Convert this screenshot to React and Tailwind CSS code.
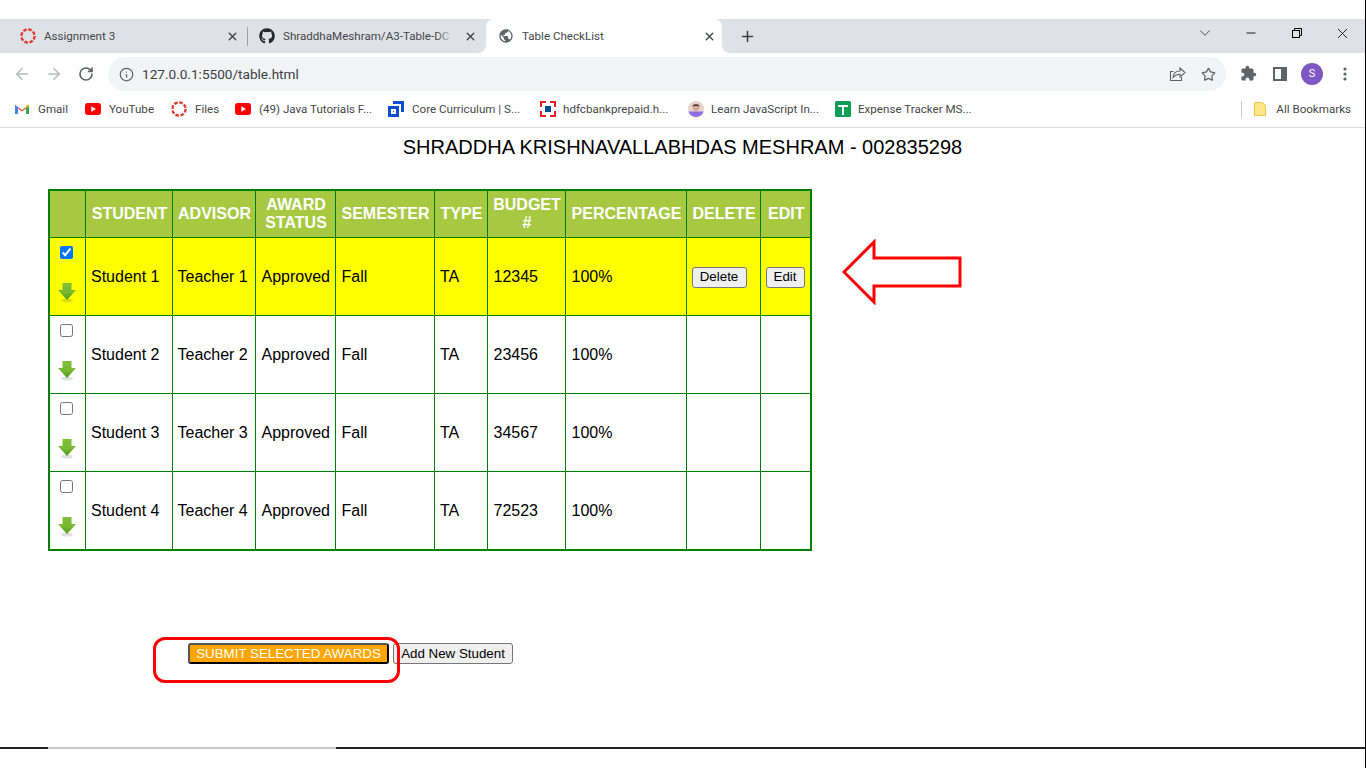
import React from 'react'
import { ArrowLeft, ArrowRight, RotateCw, Info, Star, ChevronDown, Minus, X, Plus } from 'lucide-react'
import { FaGithub } from 'react-icons/fa'
import { MdExtension, MdPublic } from 'react-icons/md'

const DashedCircle = () => (
  <svg width="16" height="16" viewBox="0 0 16 16" className="shrink-0">
    <circle cx="8" cy="8" r="6.6" fill="none" stroke="#e33b2e" strokeWidth="2.4" strokeDasharray="3.6 1.58" />
  </svg>
)

const Gmail = () => (
  <svg width="16" height="16" viewBox="0 0 16 16" className="shrink-0">
    <path d="M1 13V4l7 5 7-5v9h-3V7.5L8 10.4 4 7.5V13z" fill="#ea4335" />
    <path d="M1 4v9h3V6z" fill="#4285f4" />
    <path d="M12 6v7h3V4z" fill="#34a853" />
    <path d="M15 3.5V5l-3 2.2V4.2z" fill="#fbbc04" />
  </svg>
)

const YouTube = () => (
  <svg width="16" height="16" viewBox="0 0 16 16" className="shrink-0">
    <rect x="0" y="2" width="16" height="12" rx="3" fill="#f00" />
    <path d="M6.3 5.2v5.6L11 8z" fill="#fff" />
  </svg>
)

const CoreIcon = () => (
  <svg width="16" height="16" viewBox="0 0 16 16" className="shrink-0">
    <path d="M0 5h11v11H0z" fill="#0b4fd0" />
    <path d="M3 8h5v5H3z" fill="#fff" />
    <path d="M5 0h11v11h-3V3H5z" fill="#0b4fd0" />
    <path d="M5 10h1v1H5z" fill="#0b4fd0" />
  </svg>
)

const Hdfc = () => (
  <svg width="16" height="16" viewBox="0 0 16 16" className="shrink-0">
    <rect width="16" height="16" fill="#fff" />
    <path d="M0 0h6v2H2v4H0zM10 0h6v6h-2V2h-4zM0 10h2v4h4v2H0zM14 10h2v6h-6v-2h4z" fill="#ed1c24" />
    <rect x="5" y="5" width="6" height="6" fill="#004c8f" />
  </svg>
)

const Person = () => (
  <svg width="16" height="16" viewBox="0 0 16 16" className="shrink-0">
    <clipPath id="pc"><circle cx="8" cy="8" r="8" /></clipPath>
    <g clipPath="url(#pc)">
      <rect width="16" height="16" fill="#e6d3cf" />
      <rect y="10.5" width="16" height="6" fill="#8f6fe0" />
      <circle cx="8" cy="6.5" r="3.4" fill="#d9a68f" />
      <path d="M4.5 5.5C5 2.5 11 2.5 11.5 5.5 9.5 4.5 6.5 4.5 4.5 5.5z" fill="#3a2a26" />
    </g>
  </svg>
)

const Sheet = () => (
  <svg width="16" height="16" viewBox="0 0 16 16" className="shrink-0">
    <rect width="16" height="16" rx="1.5" fill="#0f9d58" />
    <path d="M3 4h10v2H9v8H7V6H3z" fill="#fff" />
  </svg>
)

const ShareIcon = () => (
  <svg width="17" height="16" viewBox="0 0 17 16" fill="none" stroke="#5f6368" strokeWidth="1.1" className="shrink-0">
    <path d="M4.5 5.5H1.5v9h11V11" />
    <path d="M4 11.5C4.3 7.5 7 5 11 5V2l5 4.5-5 4.5V8.2c-3 0-5 1-7 3.3z" />
  </svg>
)

const bookmarks = [
  { icon: <Gmail />, label: 'Gmail', w: 'w-[31px]', gap: 'gap-[8px]' },
  { icon: <YouTube />, label: 'YouTube', w: 'w-[46px]', gap: 'gap-[8px]' },
  { icon: <DashedCircle />, label: 'Files', w: 'w-[24px]', gap: 'gap-[8px]' },
  { icon: <YouTube />, label: '(49) Java Tutorials F...', w: 'w-[113px]', gap: 'gap-[8px]' },
  { icon: <CoreIcon />, label: 'Core Curriculum | S...', w: 'w-[112px]', gap: 'gap-[8px]' },
  { icon: <Hdfc />, label: 'hdfcbankprepaid.h...', w: 'w-[109px]', gap: 'gap-[7px]' },
  { icon: <Person />, label: 'Learn JavaScript In...', w: 'w-[108px]', gap: 'gap-[7px]' },
  { icon: <Sheet />, label: 'Expense Tracker MS...', w: 'w-[113px]', gap: 'gap-[7px]' },
]

const students = [
  { name: 'Student 1', teacher: 'Teacher 1', budget: '12345', selected: true },
  { name: 'Student 2', teacher: 'Teacher 2', budget: '23456' },
  { name: 'Student 3', teacher: 'Teacher 3', budget: '34567' },
  { name: 'Student 4', teacher: 'Teacher 4', budget: '72523' },
]

const DownArrow = ({ id }) => (
  <svg width="20" height="22" viewBox="0 0 20 22" className="block">
    <defs>
      <linearGradient id={id} x1="0" y1="0" x2="0" y2="1">
        <stop offset="0" stopColor="#7fbf3a" />
        <stop offset="0.55" stopColor="#7ab833" />
        <stop offset="1" stopColor="#4d9a1e" />
      </linearGradient>
    </defs>
    <ellipse cx="10" cy="18.5" rx="6" ry="2" fill="#000" opacity="0.12" />
    <path d="M5.5 1h9v7H19l-9 10L1 8h4.5z" fill={`url(#${id})`} />
  </svg>
)

const Btn = ({ children, className = '' }) => (
  <button className={`bg-[#efefef] border border-[#767676] rounded-[3px] text-black text-[13.33px] leading-[16px] ${className}`}>
    {children}
  </button>
)

const tdClass = 'border border-[#008000] pl-[6px] pr-0 pt-[2px] text-left font-normal'
const tdTight = 'border border-[#008000] pl-[5px] pr-0 pt-[2px] text-left font-normal'
const tdName = 'border border-[#008000] pl-[5.5px] pr-0 pt-[2px] text-left font-normal'
const tdBtn = 'border border-[#008000] pl-[5px] pr-0 pt-0 text-left font-normal'
const thClass = 'border border-[#008000] bg-[#a7c942] text-white font-bold text-center leading-[18px] pl-[2px] pr-0'

const App = () => {
  return (
    <div className="relative h-screen w-full overflow-hidden bg-white border-r border-black font-['Liberation_Sans',Arial,sans-serif] text-black">
      {/* browser chrome */}
      <div className="h-[19px] bg-white" />
      <div className="flex h-[34px] items-center bg-[#dee1e6] font-['Roboto',sans-serif] text-[11.6px] text-[#45474a]">
        <div className="flex h-full w-[232px] ml-[8px] items-center pl-[12px] pr-[2px]">
          <DashedCircle />
          <span className="ml-[8px] flex-1 pt-px">Assignment 3</span>
          <X size={13} strokeWidth={2.5} className="text-[#45474a] mr-[-1px]" />
        </div>
        <div className="ml-[7px] h-[19px] w-px bg-[#9aa0a6]" />
        <div className="flex h-full w-[238px] items-center pl-[11px] pr-[9px] overflow-hidden">
          <FaGithub size={16} className="shrink-0 text-[#24292f]" />
          <span className="relative ml-[8px] w-[171px] overflow-hidden whitespace-nowrap pt-px">
            ShraddhaMeshram/A3-Table-DC
            <span className="absolute inset-y-0 right-0 w-[18px] bg-gradient-to-r from-transparent to-[#dee1e6]" />
          </span>
          <span className="flex-1" />
          <X size={13} strokeWidth={2.5} className="shrink-0" />
        </div>
        <div className="relative flex h-full w-[236px] items-center rounded-t-lg bg-white pl-[12px] pr-[6px]">
          <div className="absolute bottom-0 -left-2 h-2 w-2 bg-white"><div className="h-full w-full rounded-br-lg bg-[#dee1e6]" /></div>
          <div className="absolute bottom-0 -right-2 h-2 w-2 bg-white"><div className="h-full w-full rounded-bl-lg bg-[#dee1e6]" /></div>
          <MdPublic size={16} className="shrink-0 text-[#5f6368]" />
          <span className="ml-[8px] flex-1 pt-px">Table CheckList</span>
          <X size={13} strokeWidth={2.5} />
        </div>
        <Plus size={17} strokeWidth={2.2} className="ml-[17px] text-[#3c4043]" />
        <div className="flex-1" />
        <ChevronDown size={18} strokeWidth={1.2} className="mr-[30px] mt-[-6px] text-[#3c4043]" />
        <Minus size={14} strokeWidth={1.5} className="mr-[33px] mt-[-6px] text-black" />
        <svg width="12" height="12" viewBox="0 0 12 12" className="mr-[31px] mt-[-6px]">
          <rect x="1.5" y="3.5" width="7" height="7" fill="none" stroke="#000" />
          <path d="M3.5 3V1.5h7v7H9" fill="none" stroke="#000" />
        </svg>
        <X size={17} strokeWidth={1.2} className="mr-[14px] mt-[-6px] text-black" />
      </div>

      <div className="flex h-[38px] items-start pt-[4px]">
        <ArrowLeft size={18} strokeWidth={2} className="ml-[13px] mt-[8px] text-[#b6b9bd]" />
        <ArrowRight size={18} strokeWidth={2} className="ml-[14px] mt-[8px] text-[#b6b9bd]" />
        <RotateCw size={16} strokeWidth={2.5} className="ml-[15px] mt-[9px] text-[#5f6368]" />
        <div className="ml-[14px] flex h-[34px] w-[1118px] items-center rounded-full bg-[#f1f3f4] pl-[11px] pr-[10px]">
          <Info size={15} strokeWidth={2} className="text-[#5f6368]" />
          <span className="ml-[8px] flex-1 font-['Roboto',sans-serif] text-[13.6px] text-[#3c4043]">127.0.0.1:5500/table.html</span>
          <ShareIcon />
          <Star size={15} strokeWidth={2} className="ml-[15px] text-[#5f6368]" />
        </div>
        <MdExtension size={17} className="ml-[14px] mt-[8px] text-[#5f6368]" />
        <svg width="14" height="14" viewBox="0 0 14 14" className="ml-[16px] mt-[10px]">
          <path d="M0 0h14v14H0z" fill="#5f6368" />
          <path d="M2 2h6v10H2z" fill="#fff" />
        </svg>
        <div className="ml-[14px] mt-[6px] flex h-[22px] w-[22px] items-center justify-center rounded-full bg-[#7e57c2] font-['Roboto',sans-serif] text-[11px] text-white">S</div>
        <svg width="4" height="14" viewBox="0 0 4 14" className="ml-[20px] mt-[10px]">
          <circle cx="2" cy="2" r="1.6" fill="#5f6368" />
          <circle cx="2" cy="7" r="1.6" fill="#5f6368" />
          <circle cx="2" cy="12" r="1.6" fill="#5f6368" />
        </svg>
      </div>

      <div className="flex h-[37px] items-center border-b border-[#dadce0] pl-[14px] font-['Roboto',sans-serif] text-[11.6px] text-[#45474a]">
        <div className="flex items-center gap-[16px]">
          {bookmarks.map((b, i) => (
            <div key={i} className={`flex items-center ${b.gap}`}>
              {b.icon}
              <span className={`${b.w} whitespace-nowrap pt-px`}>{b.label}</span>
            </div>
          ))}
        </div>
        <div className="flex-1" />
        <div className="h-[17px] w-px bg-[#c8cacd] mr-[12px]" />
        <svg width="12" height="14" viewBox="0 0 12 14" className="mr-[10px]">
          <path d="M.5.5h8l3 3v10H.5z" fill="#fde68a" stroke="#eec643" />
        </svg>
        <span className="mr-[14px] whitespace-nowrap pt-px">All Bookmarks</span>
      </div>

      {/* page */}
      <h1 className="pt-[5px] text-center text-[20px] leading-[28px] font-normal text-black">
        SHRADDHA KRISHNAVALLABHDAS MESHRAM - 002835298
      </h1>

      <table className="ml-[48px] mt-[28px] w-[763px] table-fixed border-collapse border-2 border-[#008000] text-[16px]">
        <thead>
          <tr className="h-[47px]">
            <th className={`${thClass} w-[36px]`}></th>
            <th className={`${thClass} w-[87px]`}>STUDENT</th>
            <th className={`${thClass} w-[83px]`}>ADVISOR</th>
            <th className={`${thClass} w-[80px]`}>AWARD<br />STATUS</th>
            <th className={`${thClass} w-[99px]`}>SEMESTER</th>
            <th className={`${thClass} w-[53px]`}>TYPE</th>
            <th className={`${thClass} w-[78px]`}>BUDGET<br />#</th>
            <th className={`${thClass} w-[121px]`}>PERCENTAGE</th>
            <th className={`${thClass} w-[74px]`}>DELETE</th>
            <th className={`${thClass} w-[51px]`}>EDIT</th>
          </tr>
        </thead>
        <tbody>
          {students.map((s, i) => (
            <tr key={s.name} className={`h-[78px] ${s.selected ? 'bg-[#ffff00]' : 'bg-white'}`}>
              <td className="border border-[#008000] p-0">
                <div className="flex h-[77px] flex-col items-center pt-[8px] pr-[2px]">
                  <input type="checkbox" defaultChecked={!!s.selected} className="m-0 h-[13px] w-[13px]" />
                  <div className="mt-[23px] ml-px">
                    <DownArrow id={`g${i}`} />
                  </div>
                </div>
              </td>
              <td className={tdName}>{s.name}</td>
              <td className={tdTight}>{s.teacher}</td>
              <td className={tdClass}>Approved</td>
              <td className={tdClass}>Fall</td>
              <td className={tdName}>TA</td>
              <td className={tdClass}>{s.budget}</td>
              <td className={tdClass}>100%</td>
              <td className={tdBtn}>
                {s.selected && <Btn className="h-[21px] w-[55px]">Delete</Btn>}
              </td>
              <td className={tdBtn}>
                {s.selected && <Btn className="h-[21px] w-[39px]">Edit</Btn>}
              </td>
            </tr>
          ))}
        </tbody>
      </table>

      <div className="ml-[188px] mt-[92px] flex gap-[4px]">
        <button className="h-[21px] w-[201px] rounded-[3px] border-2 border-t-[#555555] border-l-[#555555] border-r-black border-b-black bg-[#ffa500] pt-px text-center text-[13.33px] leading-[16px] text-white">
          SUBMIT SELECTED AWARDS
        </button>
        <Btn className="h-[21px] w-[120px] pt-px">Add New Student</Btn>
      </div>

      <div className="mt-[83px] flex h-[2px]">
        <div className="w-[48px] bg-[#222222]" />
        <div className="w-[288px] bg-[#c8c8c8]" />
        <div className="flex-1 bg-[#222222]" />
      </div>

      {/* annotations drawn over the page */}
      <svg width="124" height="66" viewBox="0 0 124 66" className="absolute left-[842px] top-[239px]">
        <path d="M2 33 32 3V19H118V47H32V63Z" fill="none" stroke="#ff0000" strokeWidth="3" />
      </svg>
      <div className="absolute left-[153px] top-[637px] h-[46px] w-[247px] rounded-[12px] border-[3px] border-[#ff0000]" />
    </div>
  )
}

export default App
